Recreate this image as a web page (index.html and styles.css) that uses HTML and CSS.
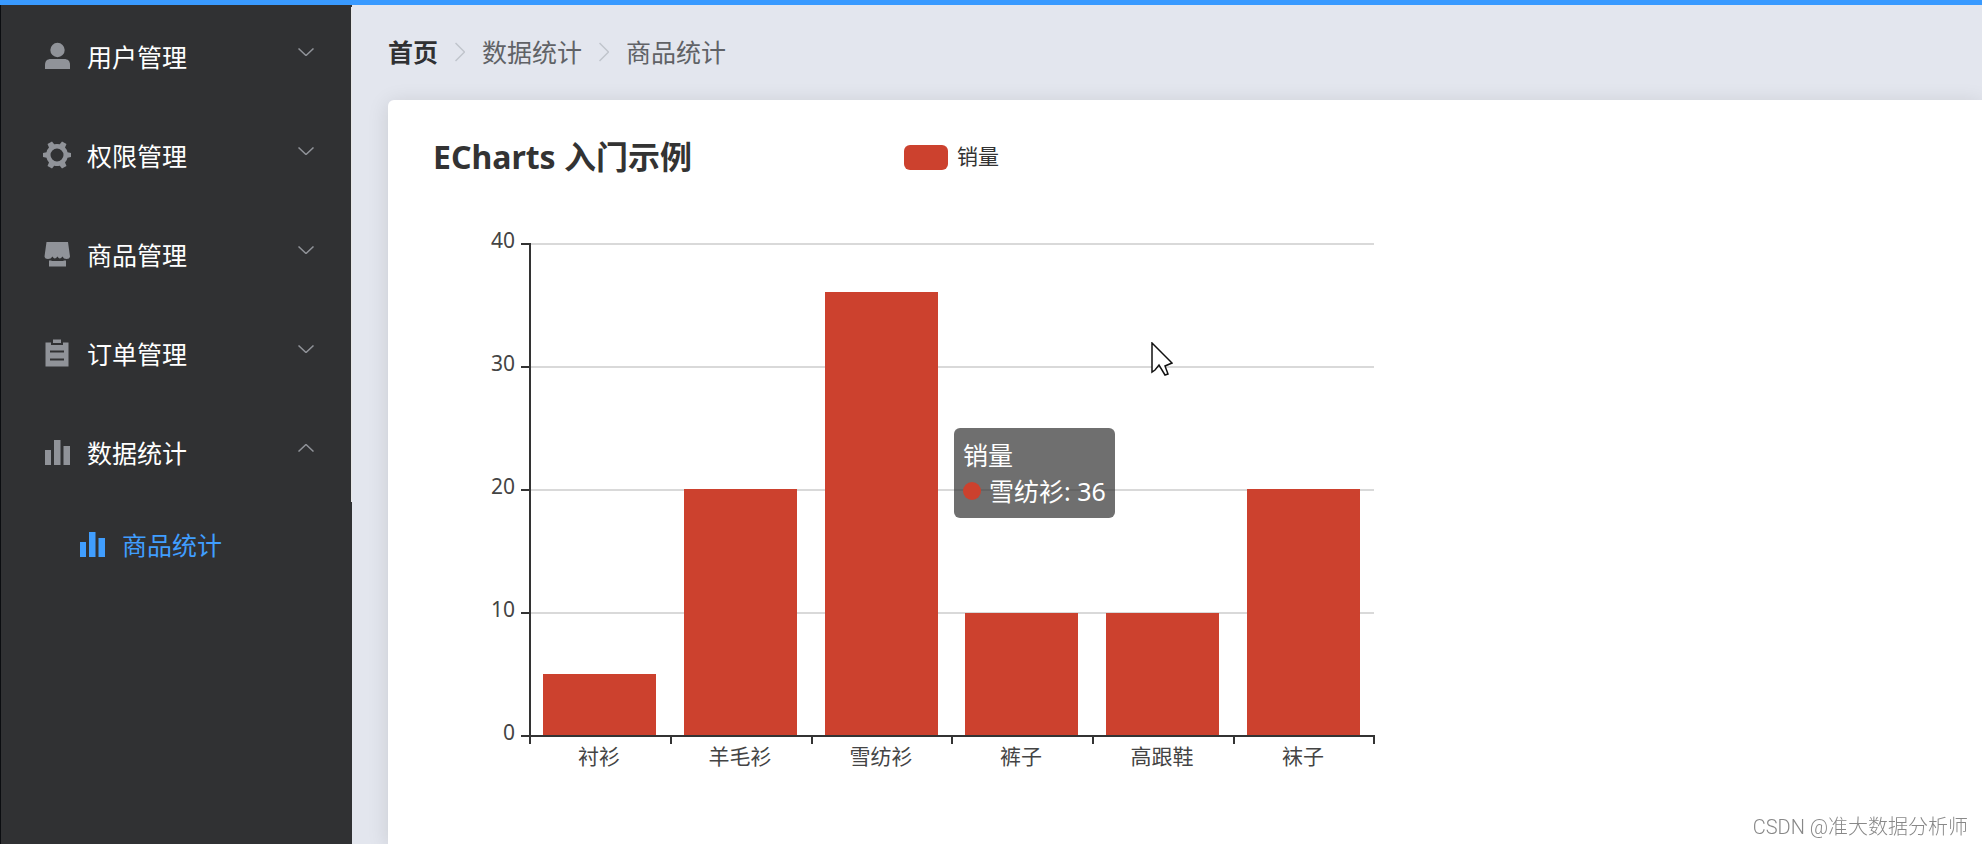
FILE: index.html
```html
<!DOCTYPE html>
<html lang="zh-CN">
<head>
<meta charset="utf-8">
<title>商品统计</title>
<link rel="stylesheet" href="styles.css">
</head>
<body>
<svg class="defs" aria-hidden="true">
  <symbol id="down" viewBox="0 0 16 8"><path d="M.5 .5 8 7.5 15.5 .5"/></symbol>
  <symbol id="next" viewBox="0 0 10 20"><path d="M.5 1 9.5 10 .5 19"/></symbol>
  <symbol id="bars" viewBox="0 0 28 28"><path d="M2 12h6v15H2zM11 2h6.500v25H11zM20.500 8h6.500v19h-6.500z"/></symbol>
</svg>
<div class="app">
  <nav class="sidebar">
    <button class="menu-title" type="button">
      <svg class="icon" viewBox="0 0 28 28"><circle cx="14.500" cy="8" r="7.2"/><path d="M2 27v-4c0-4 2-6 6-6h13c4 0 6 2 6 6v4z"/></svg>
      <span>用户管理</span><svg class="arrow"><use href="#down"/></svg>
    </button>
    <button class="menu-title" type="button">
      <svg class="icon" viewBox="0 0 28 28"><path fill-rule="evenodd" d="M0 12 3.500 11.300Q4 8.500 6 6.500L4.500 3 9 .5 11.200 3.300Q14 2.500 16.800 3.300L19 .5 23.500 3 22 6.500Q24 8.500 24.500 11.300L28 12v4l-3.500.700Q24 19.500 22 21.500L23.500 25 19 27.500 16.800 24.700Q14 25.500 11.200 24.700L9 27.500 4.500 25 6 21.500Q4 19.500 3.500 16.700L0 16zM14 7.500a6.500 6.500 0 1 0 0 13 6.500 6.500 0 0 0 0-13z"/></svg>
      <span>权限管理</span><svg class="arrow"><use href="#down"/></svg>
    </button>
    <button class="menu-title" type="button">
      <svg class="icon" viewBox="0 0 28 28"><path d="M3.500 2h21.500L27 16.500q-.5 2.500-3.500 2.500-3 0-4-2.500-1.500 2-2.700 2t-2.300-2q-1.500 2-2.700 2t-2.300-2q-1.500 2.500-4.500 2.500-3 0-3.500-2.500z"/><path d="M6 20.500h2.500V21h12v-.5H23V26.500H6z"/></svg>
      <span>商品管理</span><svg class="arrow"><use href="#down"/></svg>
    </button>
    <button class="menu-title" type="button">
      <svg class="icon" viewBox="0 0 28 28"><path fill-rule="evenodd" d="M2.500 3.500H8V6h12V3.500h5.500v24h-23zM7 11.500v2h14v-2zM7 19.500v2h14v-2z"/><path d="M10 .5h8V4h-8z"/></svg>
      <span>订单管理</span><svg class="arrow"><use href="#down"/></svg>
    </button>
    <button class="menu-title open" type="button" aria-expanded="true">
      <svg class="icon"><use href="#bars"/></svg>
      <span>数据统计</span><svg class="arrow"><use href="#down"/></svg>
    </button>
    <a class="menu-item" href="#stats"><svg class="icon"><use href="#bars"/></svg><span>商品统计</span></a>
  </nav>
  <main class="main">
    <nav class="crumbs">
      <a class="home" href="#home">首页</a>
      <svg class="next"><use href="#next"/></svg>
      <span>数据统计</span>
      <svg class="next"><use href="#next"/></svg>
      <span>商品统计</span>
    </nav>
    <section class="card">
      <div class="chart">
        <header class="chart-head">
          <h1>ECharts 入门示例</h1>
          <div class="legend"><i class="swatch"></i><span>销量</span></div>
        </header>
        <svg class="plot" viewBox="0 0 1055 580" role="img" aria-label="销量">
          <path class="grid" d="M107 42H950M107 165H950M107 288H950M107 411H950"/>
          <g class="bar">
            <rect x="119" y="472" width="113" height="62"/>
            <rect x="260" y="287" width="113" height="247"/>
            <rect x="401" y="90" width="113" height="444"/>
            <rect x="541" y="411" width="113" height="123"/>
            <rect x="682" y="411" width="113" height="123"/>
            <rect x="823" y="287" width="113" height="247"/>
          </g>
          <path class="axis" d="M106 41V542M97 534H951M97 42h9M97 165h9M97 288h9M97 411h9M247 534v8M388 534v8M528 534v8M669 534v8M810 534v8M950 534v8"/>
          <g class="label y">
            <text x="91" y="46">40</text>
            <text x="91" y="169">30</text>
            <text x="91" y="292">20</text>
            <text x="91" y="415">10</text>
            <text x="91" y="538">0</text>
          </g>
          <g class="label x">
            <text x="175" y="562">衬衫</text>
            <text x="316" y="562">羊毛衫</text>
            <text x="457" y="562">雪纺衫</text>
            <text x="597" y="562">裤子</text>
            <text x="738" y="562">高跟鞋</text>
            <text x="879" y="562">袜子</text>
          </g>
        </svg>
        <div class="tooltip">
          <div>销量</div>
          <div class="tip-row"><i class="dot"></i>雪纺衫: 36</div>
        </div>
        <svg class="cursor" viewBox="0 0 22 35"><path d="M1 1v29l3-2 4-5 6 10 3-1-3-8 7-3z"/></svg>
      </div>
    </section>
  </main>
</div>
<div class="watermark">CSDN @准大数据分析师</div>
</body>
</html>
```
FILE: styles.css
```css
* { box-sizing: border-box; }

body {
  margin: 0;
  font-family: "Noto Sans", "Noto Sans CJK SC", sans-serif;
  font-size: 25px;
  color: #333;
  overflow: hidden;
}

.defs { position: absolute; width: 0; height: 0; }

.app {
  display: flex;
  height: 100vh;
  border-top: 5px solid #399aff;
}

.sidebar {
  flex: none;
  width: 352px;
  padding-top: 2px;
  background: #303133;
  border-left: 1px solid #0b0d10;
}

.menu-title,
.menu-item {
  display: flex;
  align-items: center;
  width: 100%;
  font: inherit;
  line-height: 36px;
  text-decoration: none;
}

.menu-title {
  height: 99px;
  padding: 0 37px 0 42px;
  color: #fff;
  background: none;
  border: 0;
  border-right: 1px solid #e6e6e6;
}

.menu-item {
  height: 86px;
  padding-left: 77px;
  color: #409eff;
}

.icon {
  width: 28px;
  height: 28px;
  margin: 0 16px 2px 0;
  fill: #909399;
}

.menu-item .icon { fill: #409eff; }

.arrow {
  width: 16px;
  height: 8px;
  margin: 0 0 10px auto;
  overflow: visible;
  fill: none;
  stroke: #909399;
  stroke-width: 1.5;
}

.open .arrow { transform: rotate(180deg); }

.main {
  flex: 1;
  min-width: 0;
  display: flex;
  flex-direction: column;
  padding: 29px 0 0 36px;
  background: #e3e6ee;
  overflow: hidden;
}

.crumbs {
  display: flex;
  align-items: center;
  gap: 17px;
  line-height: 36px;
  color: #606266;
}

.home {
  font-weight: bold;
  color: #303133;
  text-decoration: none;
}

.next {
  width: 10px;
  height: 20px;
  fill: none;
  stroke: #c0c4cc;
  stroke-width: 1.5;
}

.card {
  flex: 1;
  margin-top: 30px;
  padding: 36px;
  background: #fff;
  border-radius: 6px 0 0 0;
  box-shadow: 0 3px 21px rgba(0, 0, 0, 0.12);
}

.chart {
  position: relative;
  width: 1055px;
}

.chart-head {
  display: grid;
  grid-template-columns: 1fr auto 1fr;
  height: 66px;
}

h1 {
  margin: 0;
  padding-left: 9px;
  font-size: 32px;
  line-height: 42px;
  white-space: nowrap;
}

.legend {
  display: flex;
  align-items: center;
  gap: 9px;
  height: 42px;
  font-size: 21px;
  line-height: 24px;
}

.legend span { padding-bottom: 3px; }

.swatch {
  width: 44px;
  height: 25px;
  border-radius: 6px;
  background: #cc412e;
}

.plot { display: block; width: 100%; }
.grid { stroke: #d9d9d9; stroke-width: 2; }
.bar { fill: #cc412e; }
.axis { fill: none; stroke: #333; stroke-width: 2; }
.label { font-size: 21px; fill: #444; }
.y { text-anchor: end; }
.x { text-anchor: middle; }

.tooltip {
  position: absolute;
  left: 530px;
  top: 292px;
  padding: 9px;
  border-radius: 6px;
  line-height: 36px;
  color: #fff;
  background: rgba(50, 50, 50, 0.7);
  white-space: nowrap;
}

.tip-row { display: flex; align-items: center; gap: 8px; }

.dot {
  width: 18px;
  height: 18px;
  border-radius: 50%;
  background: #cc412e;
}

.cursor {
  position: absolute;
  left: 727px;
  top: 206px;
  width: 22px;
  height: 35px;
  fill: #fff;
  stroke: #111;
  stroke-width: 1.5;
}

.watermark {
  position: fixed;
  right: 14px;
  bottom: 2px;
  font-family: Roboto, "Noto Sans CJK SC", sans-serif;
  font-size: 20px;
  font-weight: 300;
  line-height: 30px;
  color: #888;
}
```
